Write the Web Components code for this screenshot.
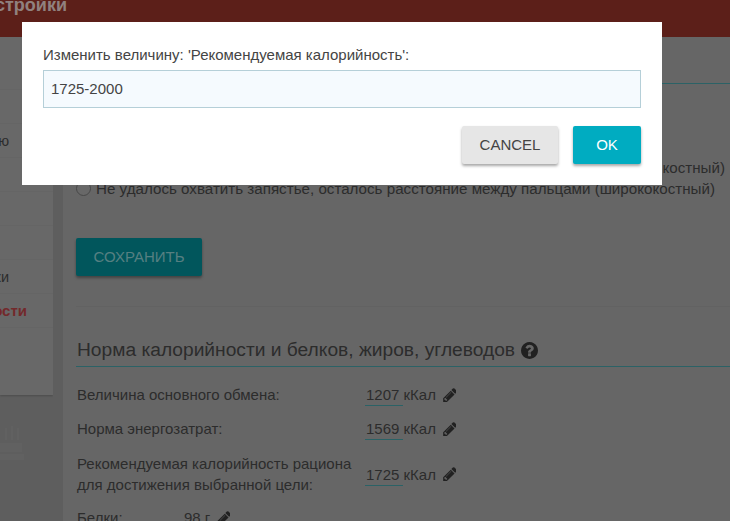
<!DOCTYPE html>
<html lang="ru">
<head>
<meta charset="utf-8">
<title>Настройки</title>
<style>
  html, body { margin: 0; height: 100%; overflow: hidden; background: #9d9d9d; }
  body { font-family: "Liberation Sans", Arial, sans-serif; font-size: 15px; color: #4a4a4a; }
</style>
</head>
<body>

<app-header>стройки</app-header>
<app-layout>
  <side-menu slot="side">
    <side-item></side-item>
    <side-item></side-item>
    <side-item>ю</side-item>
    <side-item></side-item>
    <side-item></side-item>
    <side-item></side-item>
    <side-item>ки</side-item>
    <side-item active>ости</side-item>
  </side-menu>

  <page-section>
    <radio-row align="end">костный)</radio-row>
    <radio-row>Не удалось охватить запястье, осталось расстояние между пальцами (ширококостный)</radio-row>
    <save-button>Сохранить</save-button>
  </page-section>

  <page-section heading="Норма калорийности и белков, жиров, углеводов">
    <stat-row value="1207 кКал">Величина основного обмена:</stat-row>
    <stat-row value="1569 кКал">Норма энергозатрат:</stat-row>
    <stat-row value="1725 кКал" tall>Рекомендуемая калорийность рациона<br>для достижения выбранной цели:</stat-row>
    <stat-row value="98 г" short>Белки:</stat-row>
  </page-section>
</app-layout>

<prompt-dialog label="Изменить величину: 'Рекомендуемая калорийность':" value="1725-2000"></prompt-dialog>

<script>
  const PENCIL = 'M491 1536l91-91-235-235-91 91v107h128v128h107zm523-928q0-22-22-22-10 0-17 7l-542 542q-7 7-7 17 0 22 22 22 10 0 17-7l542-542q7-7 7-17zm-54-192l416 416-832 832h-416v-416zm683 96q0 53-37 90l-166 166-416-416 166-165q36-38 90-38 53 0 91 38l235 234q37 39 37 91z';
  const QUESTION = 'M1024 1376v-192q0-14-9-23t-23-9h-192q-14 0-23 9t-9 23v192q0 14 9 23t23 9h192q14 0 23-9t9-23zm256-672q0-88-55.500-163t-138.500-116-170-41q-243 0-371 213-15 24 8 42l132 100q7 6 19 6 16 0 25-12 53-68 86-92 34-24 86-24 48 0 85.500 26t37.500 59q0 38-20 61t-68 45q-63 28-115.500 86.500t-52.500 125.500v36q0 14 9 23t23 9h192q14 0 23-9t9-23q0-19 21.500-49.500t54.500-49.500q32-18 49-28.500t46-35 44.500-48 28-60.500 12.500-81zm384 192q0 209-103 385.500t-279.500 279.500-385.500 103-385.500-103-279.500-279.500-103-385.500 103-385.500 279.500-279.500 385.500-103 385.500 103 279.500 279.500 103 385.500z';

  // Small helper so each element only declares its markup
  function define(name, html) {
    customElements.define(name, class extends HTMLElement {
      constructor() {
        super();
        this.attachShadow({ mode: 'open' });
        this.shadowRoot.innerHTML = typeof html === 'function' ? html(this) : html;
      }
    });
  }

  define('app-header', `
    <style>
      :host { display: block; height: 37px; overflow: hidden; background: #99352a; }
      div { margin: -7px 0 0 -5px; font-size: 18px; line-height: 24px; font-weight: bold; color: #f0d8d4; }
    </style>
    <div><slot></slot></div>
  `);

  define('app-layout', `
    <style>
      :host { display: grid; grid-template-columns: 53px 1fr; column-gap: 10px; height: 484px; overflow: hidden; }
      main { background: #aaa; padding-left: 13px; min-width: 0; }
    </style>
    <slot name="side"></slot>
    <main><slot></slot></main>
  `);

  define('side-menu', `
    <style>
      :host { display: block; overflow: hidden; }
      .card { background: #aeaeae; padding: 19px 0 67px; box-shadow: 0 1px 2px rgba(0,0,0,.2); }
      svg { display: block; margin-top: 28px; }
    </style>
    <div class="card"><slot></slot></div>
    <svg width="30" height="40" viewBox="0 0 30 40" fill="#a2a2a2">
      <path d="M5 5h2v12H5zM11 3h2v14h-2zM17 5h2v12h-2z"/>
      <path d="M0 20h22v9H0zM0 31h24v6H0z"/>
    </svg>
  `);

  define('side-item', `
    <style>
      :host { display: flex; justify-content: flex-end; align-items: center; height: 33px; border-bottom: 1px solid #a9a9a9; padding-right: 44px; white-space: nowrap; color: #4a4a4a; font-size: 14.5px; }
      :host([active]) { padding-right: 26px; font-size: 15px; font-weight: bold; color: #c04548; }
    </style>
    <slot></slot>
  `);

  define('page-section', (el) => {
    const heading = el.getAttribute('heading');
    return `
    <style>
      :host { display: block; box-sizing: border-box; }
      :host(:first-of-type) { height: 270px; padding-top: 46px; border-bottom: 1px solid #a4a4a4; background: linear-gradient(#49a3ab, #49a3ab) 0 46px / 100% 1px no-repeat; }
      :host(:first-of-type) .body { padding-top: 74px; }
      h2 { margin: 31px 0 17px; padding: 0 0 4px 1px; font-size: 19.2px; line-height: 24px; font-weight: normal; color: #4a4a4a; border-bottom: 1px solid #49a3ab; display: flex; align-items: center; gap: 6px; }
      svg { width: 17px; height: 17px; fill: #383838; }
    </style>
    ${heading ? `<h2>${heading}<svg viewBox="128 128 1536 1536"><path d="${QUESTION}"/></svg></h2>` : ''}
    <div class="body"><slot></slot></div>`;
  });

  define('radio-row', (el) => `
    <style>
      :host { display: flex; align-items: center; gap: 5px; height: 21px; font-size: 15.17px; color: #4a4a4a; white-space: nowrap; }
      :host([align="end"]) { justify-content: flex-end; width: 649px; }
      i { flex: none; width: 15px; height: 15px; border: 1px solid #777; border-radius: 50%; background: #aeaeae; box-sizing: border-box; }
    </style>
    ${el.getAttribute('align') === 'end' ? '' : '<i></i>'}<slot></slot>
  `);

  define('save-button', `
    <style>
      :host { display: inline-flex; align-items: center; justify-content: center; width: 126px; height: 38px; box-sizing: border-box; padding-bottom: 2px; margin-top: 39px; background: #02909a; color: #8fd4d8; border-radius: 2px;
              font-size: 15px; text-transform: uppercase; box-shadow: 0 2px 3px rgba(0,0,0,.35); }
    </style>
    <slot></slot>
  `);

  define('stat-row', (el) => `
    <style>
      :host { display: flex; align-items: center; margin-bottom: 13px; padding-left: 1px; line-height: 21px; color: #4a4a4a; }
      :host([tall]) { margin-top: 14px; margin-bottom: 12px; }
      :host([short]) .label { width: 107px; }
      .label { flex: none; width: 289px; }
      .value { display: flex; align-items: center; gap: 6px; }
      span { position: relative; }
      span::after { content: ""; position: absolute; left: -1px; bottom: -1px; width: 38px; height: 1px; background: #49a3ab; }
      svg { width: 14px; height: 14px; fill: #383838; }
    </style>
    <div class="label"><slot></slot></div>
    <div class="value"><span>${el.getAttribute('value')}</span><svg viewBox="0 128 1536 1536"><path d="${PENCIL}"/></svg></div>
  `);

  define('dialog-button', `
    <style>
      :host { display: inline-flex; align-items: center; justify-content: center; width: 96px; height: 38px; box-sizing: border-box; padding-bottom: 2px; border-radius: 2px; font-size: 15px; text-transform: uppercase;
              box-shadow: 0 2px 3px rgba(0,0,0,.35); background: #e6e6e6; color: #444; }
      :host([primary]) { width: 68px; background: #00acc1; color: #fff; }
    </style>
    <slot></slot>
  `);

  define('prompt-dialog', (el) => `
    <style>
      :host { position: fixed; inset: 0; display: block; background: rgba(0,0,0,.4); }
      .box { position: absolute; left: 22px; top: 22px; width: 640px; height: 163px; box-sizing: border-box; padding: 23px 21px 0; background: #fff; color: #444; font-size: 15px; }
      label { display: block; line-height: 20px; margin-bottom: 5px; }
      input { display: block; width: 100%; height: 38px; box-sizing: border-box; margin: 0; padding: 0 7px 2px; border: 1px solid #b5cfd8; background: #f5fafe; font: inherit; color: #444; outline: none; }
      .actions { display: flex; justify-content: flex-end; gap: 15px; margin-top: 18px; }
    </style>
    <div class="box">
      <label for="v">${el.getAttribute('label')}</label>
      <input id="v" value="${el.getAttribute('value')}">
      <div class="actions"><dialog-button>Cancel</dialog-button><dialog-button primary>OK</dialog-button></div>
    </div>
  `);
</script>
</body>
</html>
